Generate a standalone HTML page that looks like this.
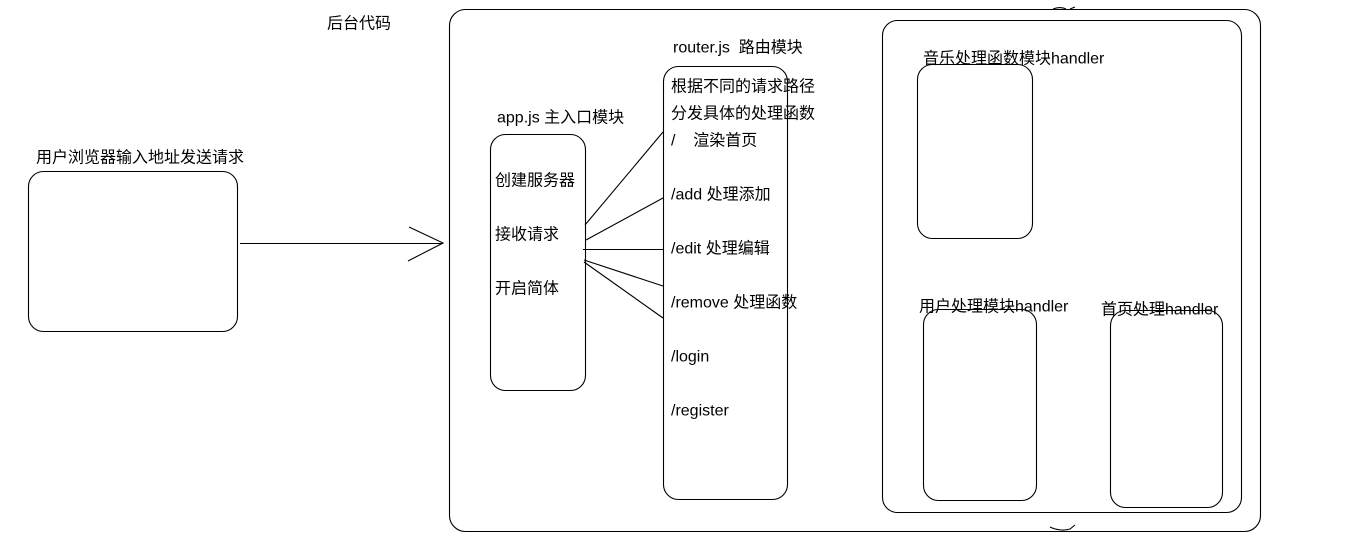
<!DOCTYPE html>
<html><head><meta charset="utf-8"><style>
html,body{margin:0;padding:0;background:#fff;width:1360px;height:546px;overflow:hidden}
svg{display:block}
text{font-family:"Liberation Sans","Noto Sans CJK SC",sans-serif;font-size:16px;fill:#000;dominant-baseline:central}
</style></head><body>
<svg width="1360" height="546" viewBox="0 0 1360 546" xmlns="http://www.w3.org/2000/svg">
<g fill="none" stroke="#000" stroke-width="1.1">
<rect x="449.5" y="9.5" width="811" height="522" rx="16"/>
<rect x="882.5" y="20.5" width="359" height="492" rx="15"/>
<rect x="917.5" y="64.5" width="115" height="174" rx="15"/>
<rect x="923.5" y="309.5" width="113" height="191" rx="15"/>
<rect x="1110.5" y="310.5" width="112" height="197" rx="15"/>
<rect x="28.5" y="171.5" width="209" height="160" rx="15"/>
<rect x="490.5" y="134.5" width="95" height="256" rx="15"/>
<rect x="663.5" y="66.5" width="124" height="433" rx="15"/>
<path d="M240 243.5H443M409 227L443 243L408 261"/>
<path d="M585 225L663 132M586 240L663 198M583 249.5H663M584 260L663 286M584 262L663 318"/>
<path d="M1053 9C1058 7 1062 7 1066 9M1070 9L1075 7M1050 527C1056 530 1064 531 1070 529L1075 525"/>
</g>
<text x="327" y="24">后台代码</text>
<text x="36" y="158">用户浏览器输入地址发送请求</text>
<text x="497" y="118">app.js 主入口模块</text>
<text x="495" y="181">创建服务器</text>
<text x="495" y="235">接收请求</text>
<text x="495" y="289">开启简体</text>
<text x="673" y="48">router.js&#160; 路由模块</text>
<text x="671" y="87">根据不同的请求路径</text>
<text x="671" y="114">分发具体的处理函数</text>
<text x="671" y="141">/&#160;&#160;&#160; 渲染首页</text>
<text x="671" y="195">/add 处理添加</text>
<text x="671" y="249">/edit 处理编辑</text>
<text x="671" y="303">/remove 处理函数</text>
<text x="671" y="357">/login</text>
<text x="671" y="411">/register</text>
<text x="923" y="59">音乐处理函数模块handler</text>
<text x="919" y="307">用户处理模块handler</text>
<text x="1101" y="310">首页处理handler</text>
</svg>
</body></html>
